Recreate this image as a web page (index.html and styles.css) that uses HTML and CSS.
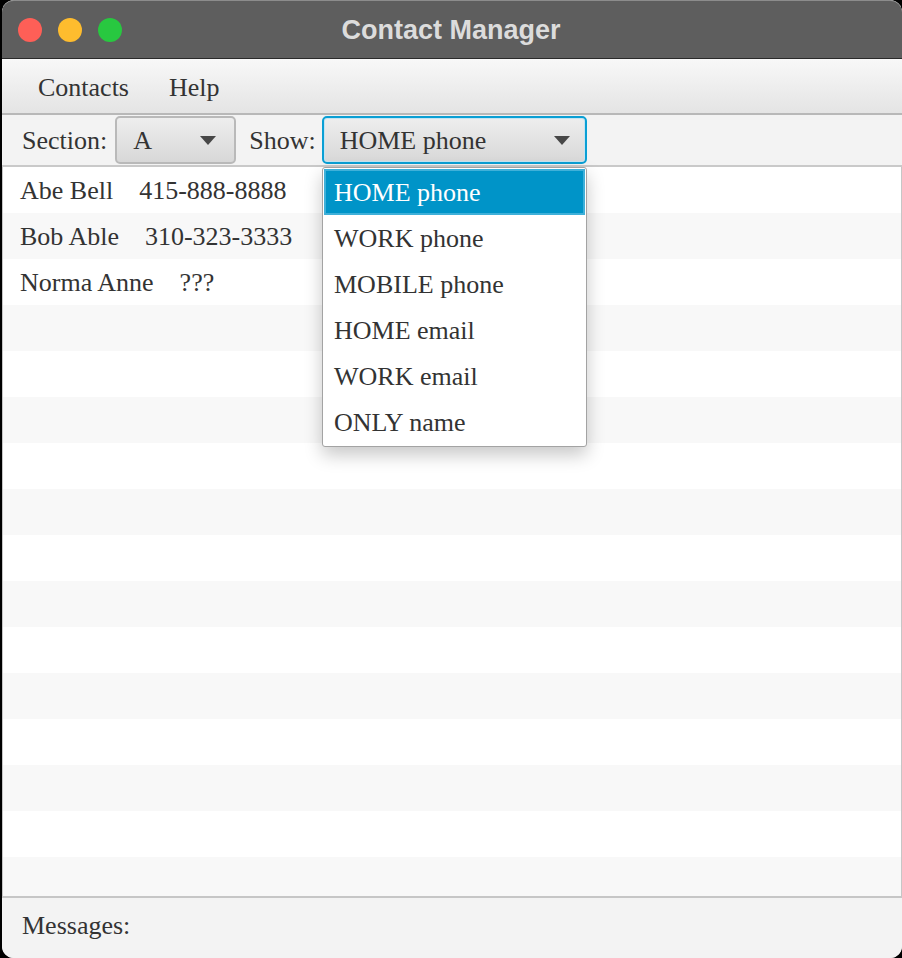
FILE: index.html
```html
<!DOCTYPE html>
<html>
<head>
<meta charset="utf-8">
<title>Contact Manager</title>
<link rel="stylesheet" href="styles.css">
</head>
<body>
<div class="window">
  <div class="titlebar">
    <div class="lights">
      <span class="light red"></span>
      <span class="light yellow"></span>
      <span class="light green"></span>
    </div>
    <div class="title">Contact Manager</div>
    <div></div>
  </div>
  <div class="menubar">
    <span class="menu">Contacts</span>
    <span class="menu">Help</span>
  </div>
  <div class="toolbar">
    <span class="label">Section:</span>
    <div class="combo combo-section">
      <span>A</span>
      <span class="arrow"></span>
    </div>
    <span class="label label-show">Show:</span>
    <div class="combo combo-show">
      <span>HOME phone</span>
      <span class="arrow"></span>
    </div>
  </div>
  <div class="list">
    <div class="row"><span class="name">Abe Bell</span><span>415-888-8888</span></div>
    <div class="row"><span class="name">Bob Able</span><span>310-323-3333</span></div>
    <div class="row"><span class="name">Norma Anne</span><span>???</span></div>
    <div class="row"></div>
    <div class="row"></div>
    <div class="row"></div>
    <div class="row"></div>
    <div class="row"></div>
    <div class="row"></div>
    <div class="row"></div>
    <div class="row"></div>
    <div class="row"></div>
    <div class="row"></div>
    <div class="row"></div>
    <div class="row"></div>
    <div class="row"></div>
  </div>
  <div class="messages">Messages:</div>
  <div class="popup">
    <div class="option selected">HOME phone</div>
    <div class="option">WORK phone</div>
    <div class="option">MOBILE phone</div>
    <div class="option">HOME email</div>
    <div class="option">WORK email</div>
    <div class="option">ONLY name</div>
  </div>
</div>
</body>
</html>
```
FILE: styles.css
```css
html, body {
  margin: 0;
  padding: 0;
  background: #000;
}
body {
  width: 902px;
  height: 958px;
  overflow: hidden;
}
.window {
  position: relative;
  margin-left: 2px;
  width: 900px;
  height: 958px;
  border-radius: 12px;
  overflow: hidden;
  display: flex;
  flex-direction: column;
  background: #f3f3f3;
  font-family: "Liberation Serif", "Times New Roman", serif;
  font-size: 26px;
  color: #333;
}
.titlebar {
  height: 57px;
  flex: none;
  background: #5e5e5e;
  border-top: 1px solid #8c8c8c;
  border-bottom: 1px solid #2a2a2a;
  border-radius: 12px 12px 0 0;
  display: grid;
  grid-template-columns: 1fr auto 1fr;
  align-items: center;
}
.lights {
  display: flex;
  gap: 16px;
  padding-left: 16px;
}
.light {
  width: 24px;
  height: 24px;
  border-radius: 50%;
  display: block;
}
.red { background: #fe5f57; }
.yellow { background: #febc2e; }
.green { background: #28c840; }
.title {
  font-family: "Liberation Sans", Arial, sans-serif;
  font-weight: bold;
  font-size: 27px;
  color: #dcdcdc;
  padding-top: 1px;
  padding-right: 2px;
}
.menubar {
  height: 56px;
  box-sizing: border-box;
  flex: none;
  background: linear-gradient(#f8f8f8, #e4e4e4);
  border-bottom: 2px solid #b8b8b8;
  display: flex;
  align-items: center;
  padding-left: 36px;
  padding-top: 3px;
  gap: 40px;
}
.toolbar {
  height: 52px;
  box-sizing: border-box;
  flex: none;
  background: #f3f3f3;
  border-bottom: 2px solid #c9c9c9;
  display: flex;
  align-items: center;
  padding-left: 20px;
}
.label {
  margin-right: 8px;
  padding-top: 2px;
}
.label-show {
  margin-left: 13px;
  margin-right: 6px;
}
.combo {
  height: 48px;
  box-sizing: border-box;
  border-radius: 5px;
  display: flex;
  align-items: center;
  justify-content: space-between;
  background: linear-gradient(#eeeeee, #d8d8d8);
  padding-top: 2px;
}
.combo-section {
  width: 121px;
  border: 2px solid #b9b9b9;
  padding-left: 16px;
  padding-right: 18px;
}
.combo-show {
  width: 265px;
  border: 2px solid #0a9fd4;
  box-shadow: inset 0 0 0 1px #c4e4f2;
  padding-left: 16px;
  padding-right: 15px;
}
.arrow {
  width: 0;
  height: 0;
  border-left: 8px solid transparent;
  border-right: 8px solid transparent;
  border-top: 9px solid #474747;
  margin-top: -2px;
}
.list {
  flex: 1;
  min-height: 0;
  overflow: hidden;
  background: #fff;
  border-left: 1px solid #c6c6c6;
  border-right: 1px solid #c6c6c6;
  border-bottom: 2px solid #c6c6c6;
}
.row {
  height: 46px;
  display: flex;
  align-items: center;
  padding-left: 17px;
  gap: 26px;
  background: #fff;
  padding-top: 2px;
  box-sizing: border-box;
}
.row:nth-child(even) {
  background: #f8f8f8;
}
.messages {
  height: 60px;
  flex: none;
  background: #f3f3f3;
  display: flex;
  align-items: center;
  padding-left: 20px;
  padding-bottom: 5px;
  box-sizing: border-box;
}
.popup {
  position: absolute;
  left: 320px;
  top: 167px;
  width: 265px;
  box-sizing: border-box;
  background: #fff;
  border: 1px solid #a3a3a3;
  border-radius: 3px;
  padding: 1px;
  box-shadow: 0 8px 18px rgba(0, 0, 0, 0.22);
}
.option {
  height: 46px;
  box-sizing: border-box;
  display: flex;
  align-items: center;
  padding-left: 10px;
  padding-top: 1px;
}
.option.selected {
  background: #0094c8;
  color: #fff;
  border: 2px solid #3fb0d9;
  padding-left: 8px;
}
```
